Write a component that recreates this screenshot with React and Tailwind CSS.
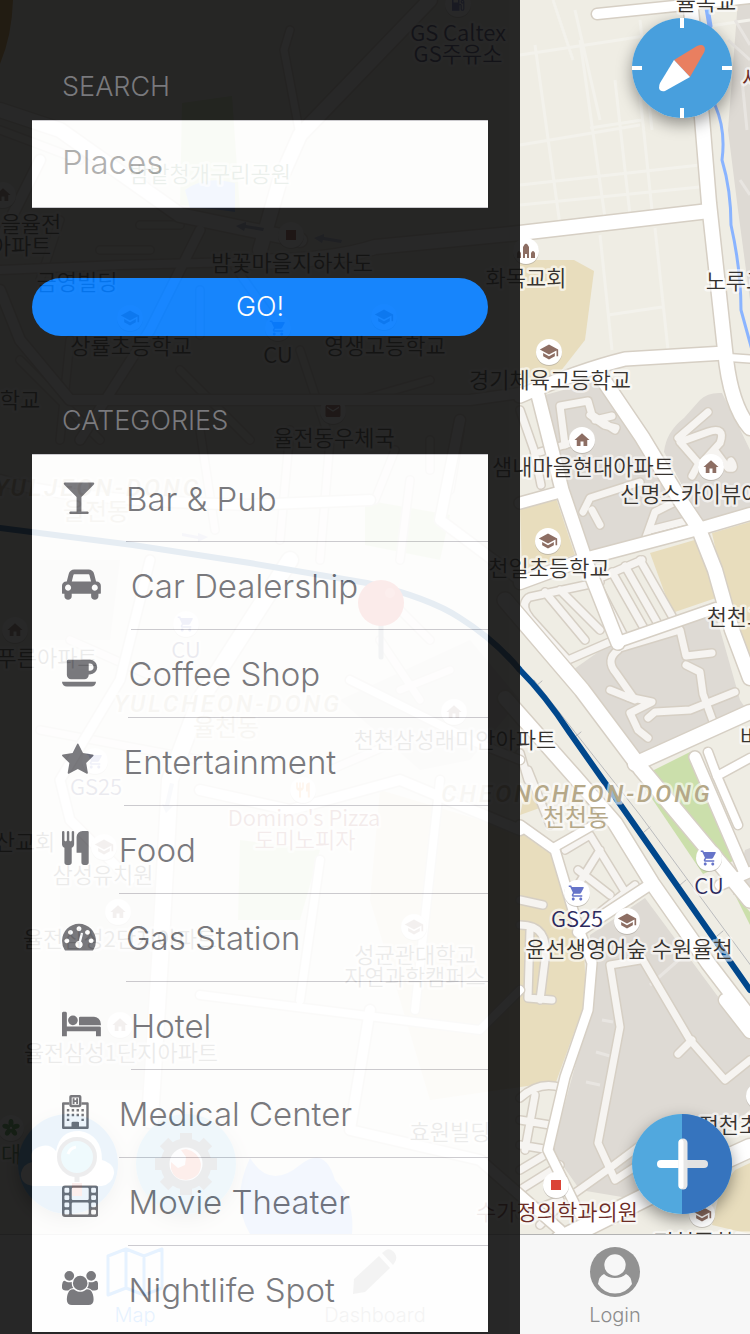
import React from 'react';
import { MdSchool, MdHome, MdShoppingCart, MdLocalGasStation, MdEmail, MdRestaurant } from 'react-icons/md';

const BLOCK_GREY = [
  'M545 395 L600 380 L690 510 L590 550 L560 470Z',
  'M664 452 Q666 432 684 418 L700 400 Q708 392 722 393 L738 425 L750 450 V512 L702 522Z',
  'M585 500 L670 485 L690 525 L592 552Z',
  'M570 672 L615 640 L715 612 L740 700 L750 715 L635 762Z',
  'M745 850 L750 848 V895 L733 895Z',
  'M590 935 L645 898 L750 1040 V1110 L640 1200 L580 1190 L552 1150 L592 1005Z',
  'M738 0 H750 V300 L738 210 L728 130Z',
  'M30 560 H120 L110 640 H30Z',
  'M340 700 L470 640 L520 700 L470 760 L420 770Z',
  'M60 880 H160 V1090 H60Z',
];
const BLOCK_BEIGE = [
  'M520 260 H574 L594 271 L585 340 L560 372 L520 385Z',
  'M520 508 L556 498 L575 555 L522 570Z',
  'M650 553 L698 539 L716 598 L672 613Z',
  'M712 533 L750 522 V655 L735 640Z',
  'M380 790 L520 832 L552 855 L584 945 L586 1000 L556 1082 L430 1100 L370 900Z',
  'M735 1170 L750 1163 V1234 L712 1225 L720 1190Z',
  'M530 770 L548 805 L520 815Z',
];
const BLOCK_GREEN = [
  'M638 778 L690 752 L740 858 L703 874Z',
  'M182 103 L232 96 L240 210 L180 205Z',
  'M365 500 L450 515 L440 560 L365 545Z',
  'M240 840 L320 850 L300 920 H238Z',
  'M735 895 L750 912 V925Z',
];
const MINOR = [
  'M520 410 L534 450 L541 485',
  'M565 445 L560 406 L588 401 L592 415 L615 430 M590 415 L604 425 L616 428',
  'M571 443 L540 452 M595 420 L612 416',
  'M678 438 L708 412 M680 442 L708 432 Q726 426 720 443 L700 465 L680 442 M698 465 L692 476 M716 452 L728 468 Q737 470 731 461',
  'M583 512 L590 498 L640 482 M592 510 L600 525',
  'M645 540 L655 512 L683 498 M650 530 L690 520',
  'M528 598 Q520 606 530 618 L568 660 M530 597 L600 582 M545 592 L585 640 M560 590 L600 630 M568 660 L612 641',
  'M600 590 L625 638 M612 572 L645 630 M625 566 L658 624 M640 560 L672 616 M600 578 L642 560',
  'M618 650 Q605 660 616 673 L635 700 L610 690 M620 648 L680 630 L686 656 L712 653 M686 665 L700 672 L703 694 L714 724',
  'M628 697 L652 702 L630 713 L638 730 L648 738 M648 718 L655 712 L690 710 L735 692',
  'M520 753 L528 780 M528 770 L550 825',
  'M565 850 L590 835 L630 900 M578 870 L610 895 M590 920 L635 885 M600 850 L575 890',
  'M520 900 L543 905 M520 925 Q550 925 545 960 L540 1000 M530 930 L528 998 L552 1000',
  'M640 960 L610 965 L620 1027 L598 1143 L615 1180 L638 1165',
  'M640 955 L690 1040 L725 1080 L750 1060 M692 1040 L678 1054',
  'M575 1193 L610 1168 L638 1147',
  'M520 1098 Q540 1080 562 1088 M535 1095 L525 1150 M520 1120 L550 1125 M520 1145 L550 1150',
  'M520 1170 L545 1155 M520 1190 L560 1165 M520 1215 L560 1200 M540 1225 L560 1205',
  'M395 450 L375 500 M410 480 L400 560 M430 440 V470 M460 430 L450 490',
  'M0 130 L80 160 M60 220 L40 280 M100 250 H150 M140 225 H180 M200 290 V335 M230 260 L280 330',
  'M20 360 L100 440 M70 340 L60 440 M180 370 L250 440 M300 350 L330 440 M360 400 L430 380',
  'M390 600 L430 640 M380 640 L420 700 M400 690 L450 670 M330 770 L400 740 M40 730 L200 760',
  'M200 430 L215 530 M290 430 L280 540 M330 440 L320 560 M70 640 L160 680',
];
const FAINT = [
  'M520 55 L750 20 M575 10 L600 120 M520 145 L640 125 M535 45 L560 225 M580 40 L605 218 M615 80 L630 215 M640 95 L652 210 M520 185 L700 165 M520 205 L700 187 M640 20 L652 130 M590 128 L642 120',
  'M600 235 L612 350 M655 228 L668 350 M608 315 L662 307 M553 0 L573 60',
];
const FAINT_GREY = 'M735 20 L750 45 M750 60 L728 40 M742 80 L747 130 M740 180 L750 195 M596 1052 L610 1056 M586 1082 L600 1085 M602 1020 L613 1022 M650 985 L690 950';
const ROADS = [
  ['M597 14 L675 6 L750 -2', 10],
  ['M690 0 L702 118 L709 203 L725 350 Q730 405 750 428', 14],
  ['M0 480 Q60 500 250 505 L370 500', 10],
  ['M240 262 Q330 262 375 247 L520 233 L709 211', 14],
  ['M520 396 Q580 370 625 359 L725 353', 13],
  ['M722 357 L750 359', 7],
  ['M538 395 L562 490 L588 567 L618 643', 13],
  ['M600 375 L642 437 L682 503 L698 527 L715 570 L732 630 L750 678', 14],
  ['M520 503 L560 492', 11],
  ['M520 583 L588 558 L702 528 L750 514', 12],
  ['M618 642 L716 608', 10],
  ['M505 600 L582 690 L642 770 L728 873 L750 900', 15],
  ['M505 698 L575 777 L615 823 L652 883 L708 963 L750 1018', 14],
  ['M635 764 L750 712', 14],
  ['M695 757 L745 873', 11],
  ['M708 752 L717 776 L738 825', 8],
  ['M717 776 L750 758', 8],
  ['M520 825 L555 850 L578 927 L592 963 L588 1010 L565 1077 L548 1150 L580 1215', 9],
  ['M578 932 L648 886', 10],
  ['M720 885 L750 872', 10],
  ['M555 847 L597 823', 8],
  ['M725 1000 L750 1032', 12],
  ['M560 1240 L680 1180 L750 1148', 18],
  ['M0 110 L60 130 L180 215 L300 240', 14],
  ['M290 30 L284 50 L300 135', 7],
  ['M260 250 L280 180 L300 135 L430 0', 14],
  ['M200 230 L150 330 L80 440', 9],
  ['M0 270 L120 265 L240 262', 8],
  ['M40 160 L0 240 M0 290 L20 340 L70 400 L250 400 L470 400 L520 393', 10],
  ['M460 420 L440 520 L520 580', 10],
  ['M150 560 L120 680 L60 780 L70 820 L130 880', 9],
  ['M290 560 L200 700 L170 780 L160 960 L150 1120', 16],
  ['M200 790 L290 810 L400 780 L520 830', 10],
  ['M440 780 L415 1010 M320 860 L300 1000 M200 995 L480 1030 L520 990', 8],
  ['M370 1010 L350 1130 L480 1160 L560 1230', 10],
  ['M520 760 L470 740 L350 680', 8],
];
const LABELS = [
  ['율목교', 706, 10], ['화목교회', 526, 286], ['노루교', 736, 289], ['경기체육고등학교', 550, 388],
  ['샘내마을현대아파트', 583, 475], ['신명스카이뷰아파트', 711, 502], ['천일초등학교', 549, 576],
  ['천천고', 737, 625], ['천천삼성래미안아파트', 455, 748], ['버', 750, 745],
  ['윤선생영어숲 수원율천', 629, 957], ['정천초', 729, 1133], ['정천중학교', 704, 1250],
  ['밤꽃마을지하차도', 292, 271], ['금영빌딩', 77, 290], ['을율전', 31, 232], ['아파트', 21, 254],
  ['상률초등학교', 131, 354], ['영생고등학교', 385, 354], ['학교', 20, 408], ['율전동우체국', 334, 446],
  ['푸른아파트', 47, 666], ['산교회', 25, 850], ['삼성유치원', 103, 883], ['율전삼성2단지아파트', 120, 947],
  ['율전삼성1단지아파트', 121, 1061], ['성균관대학교', 415, 963], ['자연과학캠퍼스', 415, 985],
  ['효원빌딩', 450, 1140],
];
const MARKERS = [
  ['school', 549, 352], ['home', 582, 440], ['home', 711, 467], ['school', 548, 541], ['cart', 577, 893],
  ['cart', 709, 858], ['school', 627, 921], ['school', 702, 1214], ['church', 526, 251], ['clinic', 556, 1185],
  ['none', 759, 1096], ['gas', 458, 4], ['clinic', 291, 235], ['school', 130, 318], ['school', 384, 317],
  ['cart', 278, 328], ['mail', 333, 411], ['home', 3, 195], ['home', 15, 630], ['cart', 186, 624],
  ['cart', 95, 761], ['food', 303, 790], ['school', 104, 847], ['home', 118, 912], ['home', 120, 1025],
  ['school', 414, 927], ['home', 454, 712], ['flower', 11, 1128],
];

function Marker({ kind, x, y }) {
  const p = { x: x - 9, y: y - 9, size: 18 };
  return (
    <g>
      <circle cx={x} cy={y + 1} r="13" fill="#a9a49b" opacity=".6" />
      <circle cx={x} cy={y} r="13" fill="#fff" />
      {kind === 'school' && <MdSchool {...p} x={x - 10} y={y - 10} size={20} color="#8d6e63" />}
      {kind === 'home' && <MdHome {...p} color="#8d6e63" />}
      {kind === 'cart' && <MdShoppingCart {...p} color="#6674c9" />}
      {kind === 'gas' && <MdLocalGasStation {...p} color="#6674c9" />}
      {kind === 'mail' && <MdEmail {...p} color="#9d5a52" />}
      {kind === 'food' && <MdRestaurant {...p} color="#f5a04a" />}
      {kind === 'clinic' && <rect x={x - 5} y={y - 5} width="10" height="10" fill={y > 500 ? '#db4437' : '#9d4a42'} />}
      {kind === 'church' && (
        <path fill="#8d6e63" d={`M${x - 9} ${y + 7}v-5q2-4 4 0v5zM${x - 3} ${y + 7}v-11q3-7 6 0v11h-2v-4h-2v4zM${x + 5} ${y + 7}v-5q2-4 4 0v5z`} />
      )}
      {kind === 'flower' && [0, 72, 144, 216, 288].map((a) => (
        <ellipse key={a} cx={x} cy={y - 5} rx="2.5" ry="4" fill="#3f9b3a" transform={`rotate(${a} ${x} ${y})`} />
      ))}
    </g>
  );
}

const RAIL = 'M0 528 L133 545 L250 563 L367 583 Q430 598 460 618 Q495 640 520 670 Q545 695 570 733 L622 807 L750 990';
const halo = { paintOrder: 'stroke' };

function MapCanvas() {
  return (
    <svg className="absolute inset-0 h-full w-full" viewBox="0 0 750 1234" preserveAspectRatio="xMinYMin slice" role="img" aria-label="Map">
      <rect width="750" height="1234" fill="#efede4" />
      {BLOCK_GREY.map((d) => <path key={d} d={d} fill="#dedad4" />)}
      {BLOCK_BEIGE.map((d) => <path key={d} d={d} fill="#e8ddbd" />)}
      {BLOCK_GREEN.map((d) => <path key={d} d={d} fill="#cbdfab" />)}
      <path d="M0 0H13Q12 35 0 64Z" fill="#c4821f" />
      <path d="M185 190 Q205 175 235 183 V212 Q210 208 190 208Z M250 1158 Q270 1190 300 1165 Q325 1145 335 1180 Q355 1200 352 1234 H250 Q230 1200 250 1158Z" fill="#8ab4f8" />
      <g fill="none" stroke="#f3f2ec" strokeWidth="3">
        {FAINT.map((d) => <path key={d} d={d} />)}
        <path d={FAINT_GREY} stroke="#e8e5e1" />
      </g>
      <g fill="none" strokeLinecap="round" strokeLinejoin="round">
        {MINOR.map((d) => <path key={d} d={d} stroke="#d6cfc4" strokeWidth="10" />)}
        {MINOR.map((d) => <path key={d} d={d} stroke="#f6f4f1" strokeWidth="7" />)}
        <path d="M708 8 L715 105 Q726 130 722 160 Q731 190 731 225 Q741 270 741 310 L752 350" stroke="#8ab4ff" strokeWidth="3" />
        <path d="M707 8 L710 26" stroke="#8ab4ff" strokeWidth="5" />
        {ROADS.map(([d, w]) => <path key={d} d={d} stroke="#d6cfc4" strokeWidth={w + 3} />)}
        {ROADS.map(([d, w]) => <path key={d} d={d} stroke="#fff" strokeWidth={w} />)}
        <path d="M534 680 L640 815 L760 978 M536 686l6-5 M575 737l6-5 M644 832l6-5 M680 885l6-5 M717 936l6-5" stroke="#babbbd" strokeWidth="1" />
        <path d={RAIL} stroke="#00478c" strokeWidth="6" />
      </g>
      <g fill="#a3abd0">
        <path d="M236 226 l10-4v3l18 3-1 3-18-3-1 3z M314 238 l10-4v3l18 3-1 3-18-3-1 3z M208 537 l-10-4v3l-16-3v3l16 3v3z" />
        <path d="M165 805 l5-22 4 1-5 22h4l-7 7-4-9z" opacity=".6" />
      </g>
      {MARKERS.map(([kind, x, y]) => <Marker key={`${x}-${y}`} kind={kind} x={x} y={y} />)}
      <g className="font-['Noto_Sans_CJK_KR','Noto_Sans',sans-serif] font-[350]" textAnchor="middle" stroke="#fff" strokeOpacity=".6" strokeWidth="5" strokeLinejoin="round" fontSize="22" fill="#37332f" style={halo}>
        {LABELS.map(([t, x, y]) => <text key={t + y} x={x} y={y}>{t}</text>)}
        <text x="557" y="1220" fill="#6d2c26">수가정의학과의원</text>
        <text x="752" y="86" fill="#6d2c26">세</text>
        <text x="210" y="182" fill="#38663d">밤밭청개구리공원</text>
        <text x="305" y="848" fill="#8b3a35">도미노피자</text>
        <text x="11" y="1162" fill="#2f6b2c">대</text>
        <g fill="#2c2a5e">
          <text x="577" y="927">GS25</text>
          <text x="709" y="894">CU</text>
          <text x="96" y="795">GS25</text>
          <text x="186" y="658">CU</text>
          <text x="278" y="363" fill="#37332f">CU</text>
          <text x="458" y="41">GS Caltex</text>
          <text x="458" y="62">GS주유소</text>
        </g>
        <text x="304" y="826" fill="#8b3a35">Domino's Pizza</text>
        <g fill="#b5a888" fontWeight="400" fontSize="24">
          <text x="576" y="826">천천동</text>
          <text x="226" y="736">율천동</text>
          <text x="96" y="520">율전동</text>
          <g className="font-['Roboto',sans-serif] font-medium italic tracking-[3px]">
            <text x="577" y="802">CHEONCHEON-DONG</text>
            <text x="228" y="712">YULCHEON-DONG</text>
            <text x="98" y="496">YULJEON-DONG</text>
          </g>
        </g>
      </g>
      <path d="M381 620V657" stroke="#7a8794" strokeWidth="5" strokeLinecap="round" />
      <circle cx="381" cy="603" r="23" fill="#e0342b" />
      <circle cx="390" cy="593" r="5" fill="#e8574f" />
    </svg>
  );
}

function CompassIcon() {
  return (
    <svg viewBox="0 0 100 100" className="h-full w-full" aria-hidden="true">
      <circle cx="50" cy="50" r="50" fill="#489fdd" />
      <path d="M50 0V10M50 90V100M0 50H10M90 50H100" stroke="#fff" strokeWidth="4" />
      <path d="M42 42 L65 28 Q72 25 73 31 Q73 34 70 38 L58 59Z" fill="#e97f60" />
      <path d="M42 42 L58 59 L33 73 Q28 74 27 70 Q27 67 28 65Z" fill="#fff" />
    </svg>
  );
}
function PlusIcon() {
  return (
    <svg viewBox="0 0 100 100" className="h-full w-full" aria-hidden="true">
      <circle cx="50" cy="50" r="50" fill="#51a8de" />
      <path d="M50 0A50 50 0 0 1 50 100Z" fill="#3674be" />
      <path d="M29 50H50" stroke="#fff" strokeWidth="8" strokeLinecap="round" />
      <path d="M54 50H72" stroke="#e2e2e2" strokeWidth="8" strokeLinecap="round" />
      <path d="M51 29V71" stroke="#e6e6e6" strokeWidth="9" strokeLinecap="round" />
      <path d="M49 28V72" stroke="#fff" strokeWidth="5" strokeLinecap="round" />
    </svg>
  );
}
function CloudIcon() {
  return (
    <svg viewBox="0 0 100 100" className="h-full w-full" aria-hidden="true">
      <circle cx="50" cy="50" r="50" fill="#3f97e0" />
      <path d="M15 72Q2 70 3 59Q5 50 14 48Q10 35 24 32Q32 30 38 37Q42 16 62 17Q84 21 84 46Q97 50 96 60Q94 70 84 72Z" fill="#fff" />
      <path d="M59 62V68" stroke="#4a4d55" strokeWidth="5" />
      <rect x="54" y="69" width="10" height="13" fill="#e9573f" />
      <circle cx="59" cy="43" r="18" fill="#5fd0ec" stroke="#4a4d55" strokeWidth="4" />
      <path d="M50 40Q52 34 58 33" stroke="#fff" strokeWidth="3" fill="none" />
    </svg>
  );
}
function GearIcon() {
  return (
    <svg viewBox="0 0 100 100" className="h-full w-full" aria-hidden="true">
      <circle cx="50" cy="50" r="50" fill="#5fb4dc" />
      <g fill="#3c4250">
        {[0, 45, 90, 135, 180, 225, 270, 315].map((a) => (
          <rect key={a} x="44" y="19" width="12" height="14" transform={`rotate(${a} 50 50)`} />
        ))}
      </g>
      <circle cx="50" cy="50" r="21" fill="#eef3f7" stroke="#3c4250" strokeWidth="9" />
      <path d="M50 35Q63 38 65 50Q65 64 50 66Q38 66 35 55L35 48L42 54L49 51L50 43L45 36Z" fill="#f0573c" />
    </svg>
  );
}

function Fab({ label, className, children }) {
  return (
    <button type="button" aria-label={label} className={`absolute size-[100px] rounded-full shadow-[0_6px_16px_rgba(0,0,0,0.4)] ${className}`}>
      {children}
    </button>
  );
}

const CATEGORIES = [
  { name: 'Bar & Pub', w: 1792, paths: ['M1699 186q0 35-43 78l-632 632v768h320q26 0 45 19t19 45-19 45-45 19h-896q-26 0-45-19t-19-45 19-45 45-19h320v-768l-632-632q-43-43-43-78 0-23 18-36.5t38-17.5 43-4h1408q23 0 43 4t38 17.5 18 36.5z'] },
  { name: 'Car Dealership', w: 2048, paths: ['M480 1088q0-66-47-113t-113-47-113 47-47 113 47 113 113 47 113-47 47-113zm36-320h1016l-89-357q-2-8-14-17.5t-21-9.5h-768q-9 0-21 9.5t-14 17.5zm1372 320q0-66-47-113t-113-47-113 47-47 113 47 113 113 47 113-47 47-113zm160-96v384q0 14-9 23t-23 9h-96v128q0 80-56 136t-136 56-136-56-56-136v-128h-1024v128q0 80-56 136t-136 56-136-56-56-136v-128h-96q-14 0-23-9t-9-23v-384q0-93 65.5-158.5t158.5-65.5h28l105-419q23-94 104-157.5t179-63.5h768q98 0 179 63.5t104 157.5l105 419h28q93 0 158.5 65.5t65.5 158.5z'] },
  { name: 'Coffee Shop', w: 1920, paths: ['M1664 640q0-80-56-136t-136-56h-64v384h64q80 0 136-56t56-136zm-1664 768h1792q0 106-75 181t-181 75h-1280q-106 0-181-75t-75-181zm1856-768q0 159-112.5 271.5t-271.5 112.5h-64v32q0 92-66 158t-158 66h-704q-92 0-158-66t-66-158v-736q0-26 19-45t45-19h1152q159 0 271.5 112.5t112.5 271.5z'] },
  { name: 'Entertainment', w: 1664, x: 64, paths: ['M1728 647q0 22-26 48l-363 354 86 500q1 7 1 20 0 21-10.5 35.5t-30.5 14.5q-19 0-40-12l-449-236-449 236q-22 12-40 12-21 0-31.5-14.5t-10.5-35.5q0-6 2-20l86-500-364-354q-25-27-25-48 0-37 56-46l502-73 225-455q19-41 49-41t49 41l225 455 502 73q56 9 56 46z'] },
  { name: 'Food', w: 1408, x: 192, paths: ['M832 64v640q0 61-35.5 111t-92.5 70v779q0 52-38 90t-90 38h-128q-52 0-90-38t-38-90v-779q-57-20-92.5-70t-35.5-111v-640q0-26 19-45t45-19 45 19 19 45v416q0 26 19 45t45 19 45-19 19-45v-416q0-26 19-45t45-19 45 19 19 45v416q0 26 19 45t45 19 45-19 19-45v-416q0-26 19-45t45-19 45 19 19 45zm768 0v1600q0 52-38 90t-90 38h-128q-52 0-90-38t-38-90v-512h-224q-13 0-22.5-9.5t-9.5-22.5v-800q0-132 94-226t226-94h256q26 0 45 19t19 45z'] },
  { name: 'Gas Station', w: 1792, paths: ['M384 1152q0-53-37.5-90.5t-90.5-37.5-90.5 37.5-37.5 90.5 37.5 90.5 90.5 37.5 90.5-37.5 37.5-90.5zm192-448q0-53-37.5-90.5t-90.5-37.5-90.5 37.5-37.5 90.5 37.5 90.5 90.5 37.5 90.5-37.5 37.5-90.5zm428 481l101-382q6-26-7.5-48.5t-38.5-29.5-48 6.5-30 39.5l-101 382q-60 5-107 43.5t-63 98.5q-20 77 20 146t117 89 146-20 89-117q16-60-6-117t-72-91zm660-33q0-53-37.5-90.5t-90.5-37.5-90.5 37.5-37.5 90.5 37.5 90.5 90.5 37.5 90.5-37.5 37.5-90.5zm-640-640q0-53-37.5-90.5t-90.5-37.5-90.5 37.5-37.5 90.5 37.5 90.5 90.5 37.5 90.5-37.5 37.5-90.5zm448 192q0-53-37.5-90.5t-90.5-37.5-90.5 37.5-37.5 90.5 37.5 90.5 90.5 37.5 90.5-37.5 37.5-90.5zm320 448q0 261-141 483-19 29-54 29h-1402q-35 0-54-29-141-221-141-483 0-182 71-348t191-286 286-191 348-71 348 71 286 191 191 286 71 348z'] },
  { name: 'Hotel', w: 2048, paths: ['M256 1024h1728q26 0 45 19t19 45v448h-256v-256h-1536v256h-256v-1216q0-26 19-45t45-19h128q26 0 45 19t19 45v704zm576-320q0-106-75-181t-181-75-181 75-75 181 75 181 181 75 181-75 75-181zm1216 256v-64q0-159-112.5-271.5t-271.5-112.5h-704q-26 0-45 19t-19 45v384h1152z'] },
  {
    name: 'Medical Center', w: 1408, paths: [
      'M64 384H384V512H128V1664H512V1472Q512 1408 576 1408H832Q896 1408 896 1472V1664H1280V512H1024V384H1344Q1408 384 1408 448V1728Q1408 1792 1344 1792H64Q0 1792 0 1728V448Q0 384 64 384Z',
      'M480 0H928Q1024 0 1024 96V544Q1024 640 928 640H480Q384 640 384 544V96Q384 0 480 0ZM512 128V512H896V128Z',
      'M560 170H660V270H748V170H848V470H748V370H660V470H560Z',
      'M256 736h128v128h-128zm256 0h128v128h-128zm256 0h128v128h-128zm256 0h128v128h-128zM256 992h128v128h-128zm256 0h128v128h-128zm256 0h128v128h-128zm256 0h128v128h-128zM256 1248h128v128h-128zm768 0h128v128h-128z',
      'M512 1440H896V1700H512Z',
    ],
  },
  { name: 'Movie Theater', w: 1920, paths: ['M160 128H1760Q1920 128 1920 288V1632Q1920 1792 1760 1792H160Q0 1792 0 1632V288Q0 128 160 128ZM192 256q-64 0-64 64v128q0 64 64 64h128q64 0 64-64v-128q0-64-64-64zm0 384q-64 0-64 64v128q0 64 64 64h128q64 0 64-64v-128q0-64-64-64zm0 384q-64 0-64 64v128q0 64 64 64h128q64 0 64-64v-128q0-64-64-64zm0 384q-64 0-64 64v128q0 64 64 64h128q64 0 64-64v-128q0-64-64-64zM1600 256q-64 0-64 64v128q0 64 64 64h128q64 0 64-64v-128q0-64-64-64zm0 384q-64 0-64 64v128q0 64 64 64h128q64 0 64-64v-128q0-64-64-64zm0 384q-64 0-64 64v128q0 64 64 64h128q64 0 64-64v-128q0-64-64-64zm0 384q-64 0-64 64v128q0 64 64 64h128q64 0 64-64v-128q0-64-64-64zM576 256q-64 0-64 64v512q0 64 64 64h768q64 0 64-64v-512q0-64-64-64zM576 1024q-64 0-64 64v512q0 64 64 64h768q64 0 64-64v-512q0-64-64-64z'] },
  {
    name: 'Nightlife Spot', w: 1920, paths: [
      'M593 896q-162 5-265 128H194q-82 0-138-40.5T0 865q0-353 124-353 6 0 43.5 21t97.5 42.5T384 597q67 0 133-23-5 37-5 66 0 139 81 256z',
      'M1327 896q162 5 265 128h134q82 0 138-40.5t56-118.5q0-353-124-353-6 0-43.5 21t-97.5 42.5-119 21.500q-67 0-133-23 5 37 5 66 0 139-81 256z',
      'M1664 1533q0 120-73 189.500t-194 69.500H523q-121 0-194-69.500T256 1533q0-53 3.500-103.500t14-109T300 1212t43-97.500 62-81 85.500-53.500T602 960q10 0 43 21.500t73 48 107 48 135 21.500 135-21.500 107-48 73-48 43-21.500q61 0 111.500 20t85.500 53.500 62 81 43 97.500 26.500 108.500 14 109 3.500 103.500z',
      'M640 256A256 256 0 1 1 128 256A256 256 0 1 1 640 256ZM1344 640A384 384 0 1 1 576 640A384 384 0 1 1 1344 640ZM1792 256A256 256 0 1 1 1280 256A256 256 0 1 1 1792 256Z',
    ],
  },
];

function CategoryIcon({ w, x = 0, paths }) {
  return (
    <svg viewBox={`${x} 0 ${w} 1792`} className="mt-[25px] h-[34px] w-auto shrink-0" fill="currentColor" fillRule="evenodd" aria-hidden="true">
      {paths.map((d) => <path key={d} d={d} />)}
    </svg>
  );
}

function SideMenu() {
  return (
    <aside className="z-10 col-start-1 row-start-1 w-[520px] max-w-full bg-[#111111] px-8 pb-[2px] font-['Inter',sans-serif] font-light text-[#6d6d72] opacity-90">
      <label htmlFor="places" className="flex h-[120px] items-end px-[30px] pb-[15px] text-[27px] leading-9">SEARCH</label>
      <input id="places" type="search" placeholder="Places" className="h-[88px] w-full border-y border-[#c8c7cc] bg-white px-[30px] pb-1 text-[33px] font-light outline-none placeholder:text-[#a9a9a9]" />
      <button type="button" className="mt-[70px] h-[58px] w-full rounded-full bg-[#007aff] text-[27px] font-light text-white">GO!</button>
      <h2 className="mt-[67px] px-[30px] pb-[15px] text-[27px] leading-9">CATEGORIES</h2>
      <ul className="border-t border-[#c8c7cc] bg-white">
        {CATEGORIES.map((c) => (
          <li key={c.name} className="group">
            <a href="#category" className="flex h-[88px] gap-[30px] pl-[30px] group-first:h-[87px] group-last:h-[86px]">
              <CategoryIcon {...c} />
              <span className="flex-1 border-b border-[#c8c7cc] pt-5 text-[33px] leading-[48px] group-last:border-0">{c.name}</span>
            </a>
          </li>
        ))}
      </ul>
    </aside>
  );
}

function TabBar() {
  const tab = 'flex flex-1 flex-col items-center pt-[11px] text-xl leading-6';
  return (
    <nav className="flex h-[100px] shrink-0 border-t border-[#b2b2b2] bg-[#f7f7f7] px-[15px] font-['Inter',sans-serif] font-light text-[#8c8c8c]">
      <a href="#map" className={`${tab} text-[#007aff]`}>
        <svg viewBox="0 0 60 50" className="mb-[5px] h-[52px] w-[60px]" fill="none" stroke="currentColor" strokeWidth="3" strokeLinejoin="round" aria-hidden="true">
          <path d="M3 9 L21 2 L39 9 L57 2 V41 L39 48 L21 41 L3 48Z M21 2V41 M39 9V48" />
        </svg>
        Map
      </a>
      <a href="#dashboard" className={tab}>
        <svg viewBox="0 0 50 50" className="mb-[5px] h-[52px] w-[50px]" fill="currentColor" aria-hidden="true">
          <path d="M4 32 L29 9 L40 21 L15 45 L3 47Z M32 6 L36 3 Q40 1 44 5 Q48 10 45 15 L43 18Z" />
        </svg>
        Dashboard
      </a>
      <a href="#login" className={tab}>
        <svg viewBox="0 0 50 50" className="mb-[5px] h-[52px] w-[50px]" aria-hidden="true">
          <circle cx="25" cy="25" r="25" fill="#929292" />
          <circle cx="25" cy="18" r="10.700" fill="#f7f7f7" />
          <path d="M8 37Q9 29 14 27Q18 31 25 31T36 27Q41 29 42 37Q36 46.500 25 46.500T8 37Z" fill="#f7f7f7" />
        </svg>
        Login
      </a>
    </nav>
  );
}

export default function App() {
  return (
    <div className="grid min-h-screen w-full grid-cols-1 overflow-hidden">
      <main className="col-start-1 row-start-1 flex flex-col">
        <div className="relative flex-1 overflow-hidden">
          <MapCanvas />
          <Fab label="Compass" className="top-[18px] right-[18px]"><CompassIcon /></Fab>
          <Fab label="Search nearby" className="bottom-5 left-[18px]"><CloudIcon /></Fab>
          <Fab label="Settings" className="bottom-5 left-[136px]"><GearIcon /></Fab>
          <Fab label="Add place" className="right-[18px] bottom-5"><PlusIcon /></Fab>
        </div>
        <TabBar />
      </main>
      <SideMenu />
    </div>
  );
}
